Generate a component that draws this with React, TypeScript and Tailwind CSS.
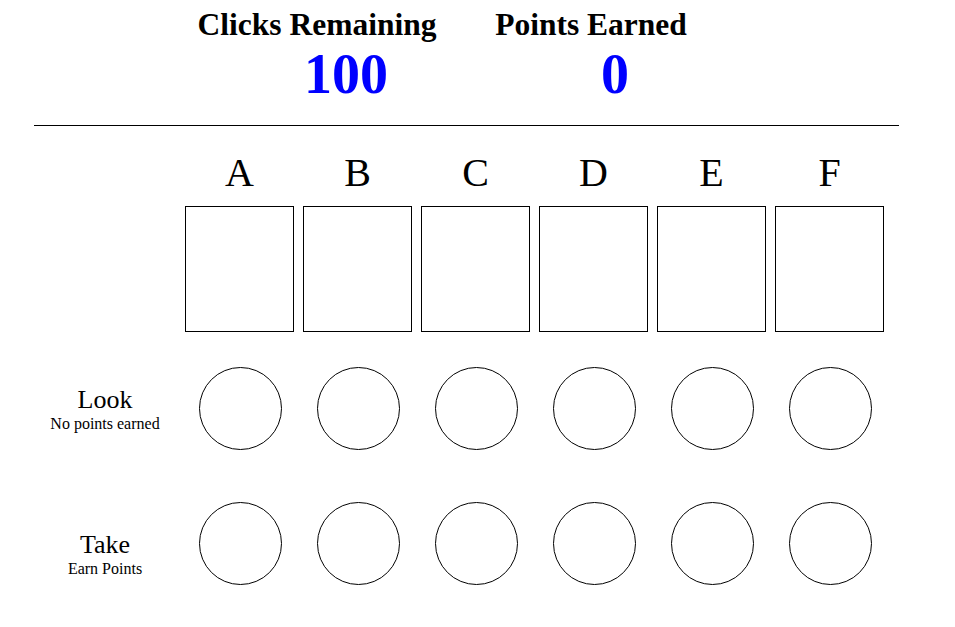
import React from "react";

const cols = ["A", "B", "C", "D", "E", "F"];

function CircleRow({ title, sub, pt }: { title: string; sub: string; pt: string }) {
  return (
    <div className="flex">
      <div className={`ml-[34px] w-[142px] text-center ${pt}`}>
        <div className="text-[26px] leading-[30px]">{title}</div>
        <div className="text-[16px] leading-[18px]">{sub}</div>
      </div>
      <div className="ml-[9px] flex gap-[9px]">
        {cols.map((c) => (
          <div key={c} className="flex w-[109px] justify-center pl-[2px]">
            <div className="h-[83px] w-[83px] rounded-full border border-black" />
          </div>
        ))}
      </div>
    </div>
  );
}

export default function App() {
  return (
    <div className="h-[627px] w-[955px] overflow-hidden bg-white font-['Liberation_Serif','Times_New_Roman',serif] text-black">
      <div className="flex pl-[187px] pt-[9px]">
        <div className="flex w-[260px] flex-col items-center">
          <div className="text-[31.5px] font-bold leading-[32px] whitespace-nowrap">Clicks Remaining</div>
          <div className="mt-[5px] pl-[58px] text-[56px] font-bold leading-[56px] text-[#0000ff]">100</div>
        </div>
        <div className="ml-[14px] flex w-[260px] flex-col items-center">
          <div className="text-[31.5px] font-bold leading-[32px] whitespace-nowrap">Points Earned</div>
          <div className="mt-[5px] pl-[48px] text-[56px] font-bold leading-[56px] text-[#0000ff]">0</div>
        </div>
      </div>

      <div className="ml-[34px] mt-[23px] h-px w-[865px] bg-black" />

      <div className="mt-[27px] flex gap-[9px] pl-[185px]">
        {cols.map((c) => (
          <div key={c} className="w-[109px] text-center text-[40px] leading-[40px]">
            {c}
          </div>
        ))}
      </div>

      <div className="mt-[13px] flex gap-[9px] pl-[185px]">
        {cols.map((c) => (
          <div key={c} className="h-[126px] w-[109px] border border-black" />
        ))}
      </div>

      <div className="mt-[35px]">
        <CircleRow title="Look" sub="No points earned" pt="pt-[18px]" />
      </div>
      <div className="mt-[52px]">
        <CircleRow title="Take" sub="Earn Points" pt="pt-[28px]" />
      </div>
    </div>
  );
}
